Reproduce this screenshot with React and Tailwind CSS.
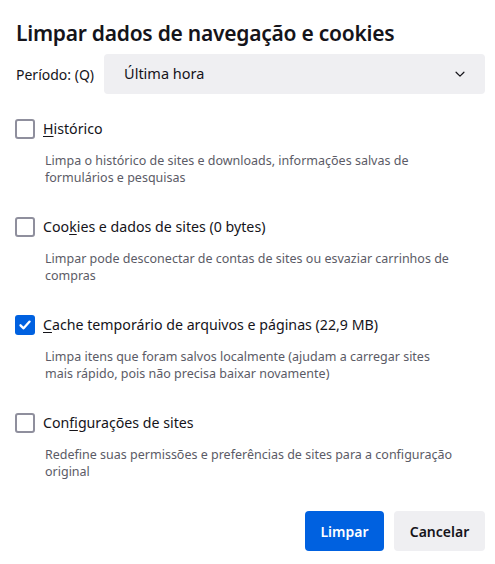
import React, { useState } from 'react';

const items = [
  {
    id: 'history',
    label: ['', 'H', 'istórico'],
    description: 'Limpa o histórico de sites e downloads, informações salvas de formulários e pesquisas',
    checked: false,
  },
  {
    id: 'cookies',
    label: ['Coo', 'k', 'ies e dados de sites (0 bytes)'],
    description: 'Limpar pode desconectar de contas de sites ou esvaziar carrinhos de compras',
    checked: false,
  },
  {
    id: 'cache',
    label: ['', 'C', 'ache temporário de arquivos e páginas (22,9 MB)'],
    description: 'Limpa itens que foram salvos localmente (ajudam a carregar sites mais rápido, pois não precisa baixar novamente)',
    checked: true,
  },
  {
    id: 'site-settings',
    label: ['Con', 'f', 'igurações de sites'],
    description: 'Redefine suas permissões e preferências de sites para a configuração original',
    checked: false,
  },
];

const Checkbox = ({ checked, onChange }) => (
  <button
    onClick={onChange}
    className={`w-[20px] h-[20px] shrink-0 rounded-[3px] flex items-center justify-center ${
      checked ? 'bg-[#0061e0] border-0' : 'border-2 border-[#8f8f9d] bg-white'
    }`}
  >
    {checked && (
      <svg width="14" height="14" viewBox="0 0 14 14" fill="none">
        <path d="M2.5 7.3 L5.6 10.3 L11.6 3.6" stroke="white" strokeWidth="2.3" strokeLinecap="round" strokeLinejoin="round" />
      </svg>
    )}
  </button>
);

const App = () => {
  const [state, setState] = useState(items.map((i) => i.checked));

  return (
    <div
      className="w-[495px] h-[564px] bg-white text-[#15141a] pl-[16px] pr-[10px] pt-[18px]"
      style={{ fontFamily: '"Noto Sans", "Open Sans", sans-serif' }}
    >
      <h1 className="text-[21px] font-semibold leading-[30px] tracking-[-0.25px]">
        Limpar dados de navegação e cookies
      </h1>

      <div className="mt-[6px] flex items-center gap-[10px]">
        <span className="text-[14px] text-[#15141a]">Período: (Q)</span>
        <div className="flex-1 h-[40px] rounded-[4px] bg-[#efeff2] flex items-center justify-between pl-[20px] pr-[18px]">
          <span className="text-[14.5px]">Última hora</span>
          <svg width="14" height="14" viewBox="0 0 16 16" fill="none">
            <path d="M3.5 6 L8 10.5 L12.5 6" stroke="#15141a" strokeWidth="1.4" strokeLinecap="round" strokeLinejoin="round" />
          </svg>
        </div>
      </div>

      <div className="mt-[25px] flex flex-col gap-[31px]">
        {items.map((item, idx) => (
          <div key={item.id} className="flex flex-col">
            <label className="flex items-center gap-[8px] ml-[-1px] h-[20px]">
              <Checkbox
                checked={state[idx]}
                onChange={() => setState((s) => s.map((v, i) => (i === idx ? !v : v)))}
              />
              <span className="text-[14.2px] leading-[20px]">
                {item.label[0]}
                <span className="underline underline-offset-[2px]">{item.label[1]}</span>
                {item.label[2]}
              </span>
            </label>
            <p className="mt-[13px] pl-[29px] pr-[29px] text-[12.5px] leading-[17px] text-[#5b5b66]">
              {item.description}
            </p>
          </div>
        ))}
      </div>

      <div className="mt-[31px] flex justify-end gap-[10px]">
        <button className="h-[40px] w-[79px] rounded-[4px] bg-[#0061e0] text-white text-[14px] font-semibold">
          Limpar
        </button>
        <button className="h-[40px] w-[91px] rounded-[4px] bg-[#efeff2] text-[#15141a] text-[14px] font-semibold">
          Cancelar
        </button>
      </div>
    </div>
  );
};

export default App;
